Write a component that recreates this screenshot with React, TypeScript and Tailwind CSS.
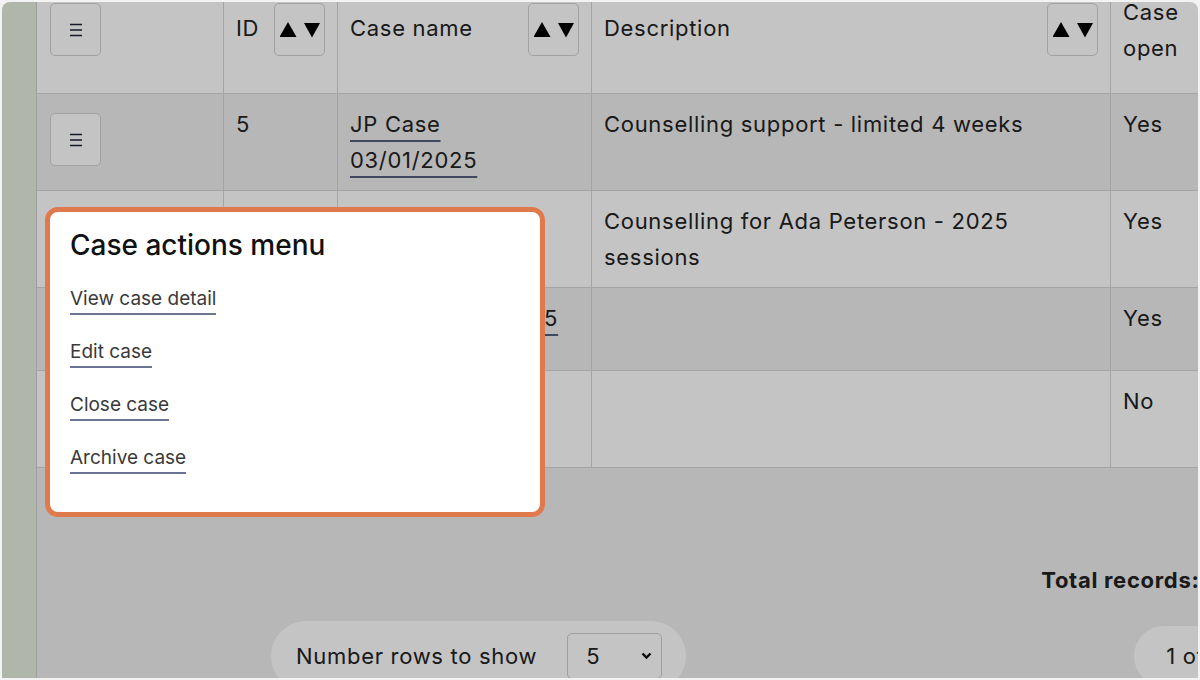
import React from "react";

type Row = {
  id: string;
  name: string[];
  description: string;
  open: string;
};

const rows: Row[] = [
  { id: "5", name: ["JP Case", "03/01/2025"], description: "Counselling support - limited 4 weeks", open: "Yes" },
  { id: "4", name: ["AP Case 2025"], description: "Counselling for Ada Peterson - 2025 sessions", open: "Yes" },
  { id: "3", name: ["Intake: 01/02/2025"], description: "", open: "Yes" },
  { id: "2", name: ["Referral case", "12/2024"], description: "", open: "No" },
];

const MenuIcon = () => (
  <svg width="12" height="14" viewBox="0 0 12 14" fill="none">
    <path d="M0 1.5h12M0 7h12M0 12.5h12" stroke="#1c2333" strokeWidth="1.5" />
  </svg>
);

const SortIcon = () => (
  <svg width="40" height="16" viewBox="0 0 40 16">
    <path d="M8 0L16.5 15H-0.5Z" fill="#000" />
    <path d="M24 1H40L32 15.5Z" fill="#000" />
  </svg>
);

const IconButton = ({ children }: { children: React.ReactNode }) => (
  <button
    type="button"
    className="flex h-[53px] w-[51px] shrink-0 items-center justify-center rounded-[5px] border border-[#d2d2d2] bg-white"
  >
    {children}
  </button>
);

const HeaderCell = ({ label }: { label: string }) => (
  <div className="flex items-center justify-between gap-2">
    <span className="-mt-[4px]">{label}</span>
    <IconButton>
      <SortIcon />
    </IconButton>
  </div>
);

const cell = "border-r border-b border-[#d6d6d6] px-3";

const App = () => {
  return (
    <div className="h-[680px] w-[1200px] overflow-hidden bg-[#f3f3f3] p-[2px] font-['Inter',sans-serif]">
      <div className="relative flex h-full overflow-hidden rounded-t-[8px] bg-[#efefef]">
        <aside className="w-[35px] shrink-0 border-r border-[#cfcfcf] bg-[#e5efdd]" />

        <main className="flex w-[1274px] shrink-0 flex-col text-[22px] tracking-[0.7px] text-[#222]">
          <div className="-mt-[11px] grid grid-cols-[187px_114px_254px_519px_200px] leading-9">
            {/* header */}
            <div className={`${cell} bg-white pt-3 pb-[37px] pl-[13px]`}>
              <IconButton>
                <MenuIcon />
              </IconButton>
            </div>
            <div className={`${cell} bg-white pt-3`}>
              <HeaderCell label="ID" />
            </div>
            <div className={`${cell} bg-white pt-3`}>
              <HeaderCell label="Case name" />
            </div>
            <div className={`${cell} bg-white pt-3`}>
              <HeaderCell label="Description" />
            </div>
            <div className={`${cell} bg-white pt-3`}>
              <div className="flex h-[53px] items-center">
                <span className="w-[64px]">Case open</span>
              </div>
            </div>

            {rows.map((row, index) => {
              const bg = index % 2 === 0 ? "bg-[#efefef]" : "bg-white";
              return (
                <React.Fragment key={row.id}>
                  <div className={`${cell} ${bg} pt-[19px] pb-[10px] pl-[13px]`}>
                    <IconButton>
                      <MenuIcon />
                    </IconButton>
                  </div>
                  <div className={`${cell} ${bg} py-3`}>{row.id}</div>
                  <div className={`${cell} ${bg} py-3`}>
                    <a
                      href="#"
                      className="underline decoration-[#51607e] decoration-2 underline-offset-[8px]"
                    >
                      {row.name.map((part, i) => (
                        <React.Fragment key={i}>
                          {i > 0 && <br />}
                          {part}
                        </React.Fragment>
                      ))}
                    </a>
                  </div>
                  <div className={`${cell} ${bg} py-3`}>{row.description}</div>
                  <div className={`${cell} ${bg} py-3`}>{row.open}</div>
                </React.Fragment>
              );
            })}
          </div>

          <div className="mt-[94px] flex justify-end pr-[90px] font-bold leading-9">
            Total records: 4
          </div>

          <div className="mt-[23px] flex items-center gap-[448px] pl-[234px]">
            <div className="flex items-center gap-[30px] rounded-full bg-white py-3 pr-6 pl-[25px]">
              <span>Number rows to show</span>
              <div className="flex h-[46px] w-[95px] items-center justify-between rounded-[5px] border border-[#cfcfcf] pr-[9px] pl-[18px]">
                <span>5</span>
                <svg width="11" height="8" viewBox="0 0 11 8" fill="none">
                  <path d="M1.5 1.5L5.5 5.5L9.5 1.5" stroke="#111" strokeWidth="2.4" />
                </svg>
              </div>
            </div>
            <div className="flex h-[60px] items-center gap-4 rounded-full bg-white px-8">
              <span>1 of 1</span>
            </div>
          </div>
        </main>

        {/* backdrop */}
        <div className="absolute inset-0 bg-black/[0.23]" />

        {/* case actions dialog */}
        <div className="absolute top-[205px] left-[43px] h-[310px] w-[500px] rounded-[13px] border-[5px] border-[#e07a4d] bg-white px-5 pt-[15px]">
          <h2 className="text-[28px] leading-9 font-medium text-[#111]">Case actions menu</h2>
          <div className="mt-[24px] flex flex-col items-start gap-[25px] text-[19px] leading-6 text-[#3a3a3a]">
            {["View case detail", "Edit case", "Close case", "Archive case"].map((label) => (
              <a key={label} href="#" className="border-b-2 border-[#6b7593] pb-[2px]">
                {label}
              </a>
            ))}
          </div>
        </div>
      </div>
    </div>
  );
};

export default App;
